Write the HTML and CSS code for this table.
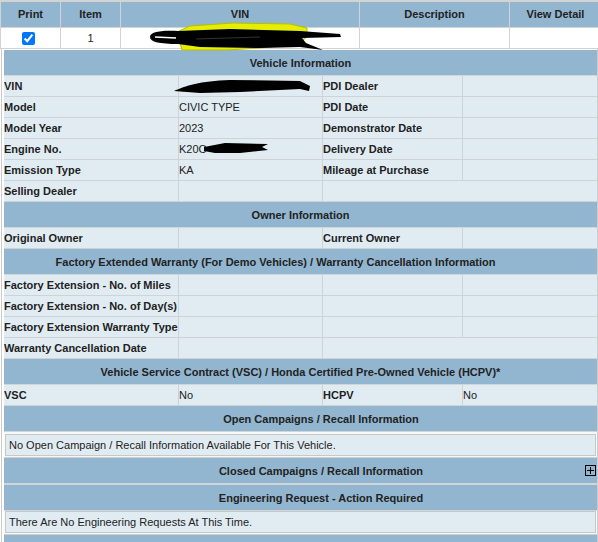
FILE: index.html
```html
<!DOCTYPE html>
<html>
<head>
<meta charset="utf-8">
<title>Vehicle Detail</title>
<link rel="stylesheet" href="styles.css">
</head>
<body>
<div class="list">
  <div class="lh first">Print</div>
  <div class="lh">Item</div>
  <div class="lh">VIN</div>
  <div class="lh">Description</div>
  <div class="lh">View Detail</div>
  <div class="lc first"><input type="checkbox" class="chk" checked></div>
  <div class="lc">1</div>
  <div class="lc"></div>
  <div class="lc"></div>
  <div class="lc"></div>
</div>

<div class="detail">
  <div class="info">
    <div class="hdr"><span>Vehicle Information</span></div>
    <div class="lbl">VIN</div><div class="val"></div><div class="lbl">PDI Dealer</div><div class="val last"></div>
    <div class="lbl">Model</div><div class="val">CIVIC TYPE</div><div class="lbl">PDI Date</div><div class="val last"></div>
    <div class="lbl">Model Year</div><div class="val">2023</div><div class="lbl">Demonstrator Date</div><div class="val last"></div>
    <div class="lbl">Engine No.</div><div class="val">K20C</div><div class="lbl">Delivery Date</div><div class="val last"></div>
    <div class="lbl">Emission Type</div><div class="val">KA</div><div class="lbl">Mileage at Purchase</div><div class="val last"></div>
    <div class="lbl">Selling Dealer</div><div class="val"></div><div class="val span2 last"></div>

    <div class="hdr"><span>Owner Information</span></div>
    <div class="lbl">Original Owner</div><div class="val"></div><div class="lbl">Current Owner</div><div class="val last"></div>

    <div class="hdr"><span class="shift-left">Factory Extended Warranty (For Demo Vehicles) / Warranty Cancellation Information</span></div>
    <div class="lbl">Factory Extension - No. of Miles</div><div class="val"></div><div class="val"></div><div class="val last"></div>
    <div class="lbl">Factory Extension - No. of Day(s)</div><div class="val"></div><div class="val"></div><div class="val last"></div>
    <div class="lbl">Factory Extension Warranty Type</div><div class="val"></div><div class="val"></div><div class="val last"></div>
    <div class="lbl">Warranty Cancellation Date</div><div class="val"></div><div class="val span2 last"></div>

    <div class="hdr"><span>Vehicle Service Contract (VSC) / Honda Certified Pre-Owned Vehicle (HCPV)*</span></div>
    <div class="lbl">VSC</div><div class="val">No</div><div class="lbl">HCPV</div><div class="val last">No</div>

    <div class="hdr"><span class="shift-right">Open Campaigns / Recall Information</span></div>
    <div class="boxrow"><div class="box">No Open Campaign / Recall Information Available For This Vehicle.</div></div>

    <div class="hdr hdr-gap"><span class="shift-right">Closed Campaigns / Recall Information</span>
      <svg class="toggle" width="11" height="11" viewBox="0 0 11 11"><rect x="0.5" y="0.5" width="10" height="10" fill="none" stroke="#000"/><path d="M2 5.5H9M5.5 2V9" stroke="#000" fill="none"/></svg>
    </div>

    <div class="hdr"><span class="shift-right">Engineering Request - Action Required</span></div>
    <div class="boxrow tight"><div class="box">There Are No Engineering Requests At This Time.</div></div>

    <div class="hdr">
      <svg class="toggle" width="11" height="11" viewBox="0 0 11 11"><rect x="0.5" y="0.5" width="10" height="10" fill="none" stroke="#000"/><path d="M2 5.5H9M5.5 2V9" stroke="#000" fill="none"/></svg>
    </div>
  </div>
</div>

<svg class="redactions" width="598" height="542" viewBox="0 0 598 542">
  <path d="M177,32 L190,26 L233,23 L290,24 L307,28 L307,37 L298,44 L260,48 L227,50 L182,50 Z" fill="#e6ee00" stroke="#b9bd00" stroke-width="1"/>
  <path d="M150,37 C150,32 160,30 178,31 L230,29 L300,31 L340,34 L341,37 L302,38 L306,43 L323,50 L300,47 L260,48 L200,47 L178,44 C160,44 150,42 150,37 Z" fill="#000"/>
  <path d="M155,37 L176,38" stroke="#fff" stroke-width="1.5" fill="none"/>
  <path d="M196,39 L260,37" stroke="#333" stroke-width="1" fill="none"/>
  <path d="M174,91 C185,86 200,81 230,80 L300,81 L310,86 L309,91 L300,89 L240,92 L200,93 Z" fill="#000"/>
  <path d="M204,147 L225,143 L268,144 L262,147 L268,150 L240,153 L215,153 L204,151 Z" fill="#000"/>
</svg>
</body>
</html>
```

FILE: styles.css
```css
html, body {
  margin: 0;
  padding: 0;
  overflow: hidden;
  background: #ffffff;
}

body {
  position: relative;
  width: 598px;
  height: 542px;
  font-family: "Liberation Sans", Arial, sans-serif;
  font-size: 11px;
  color: #222222;
}

/* top list */
.list {
  display: grid;
  grid-template-columns: 61px 60px 239px 150px 92px;
  width: 602px;
}

.lh, .lc {
  box-sizing: border-box;
  border-right: 1px solid #d3d3d3;
  border-bottom: 1px solid #d3d3d3;
  text-align: center;
}

.lh {
  height: 28px;
  line-height: 25px;
  border-top: 2px solid #d3d3d3;
  background: #92b6d0;
  font-weight: bold;
}

.lc {
  height: 21px;
  line-height: 20px;
  background: #ffffff;
}

.first {
  border-left: 1px solid #d3d3d3;
}

.chk {
  width: 13px;
  height: 13px;
  margin: 3px 7px 3px 3px;
  vertical-align: -3px;
}

/* detail */
.detail {
  margin-left: 1px;
  padding-top: 1px;
  padding-left: 2px;
  border-left: 1px solid #cccccc;
  border-right: 1px solid #cccccc;
}

.info {
  display: grid;
  grid-template-columns: 175px 144px 140px 134px;
  width: 593px;
}

.hdr {
  grid-column: 1 / -1;
  box-sizing: border-box;
  height: 26px;
  border-bottom: 1px solid #d0d6da;
  background: #92b6d0;
  font-weight: bold;
  display: grid;
  align-items: center;
  justify-items: center;
}

.hdr > * {
  grid-area: 1 / 1;
}

.hdr-gap {
  height: 27px;
  border-bottom-width: 2px;
}

.shift-left {
  padding-right: 50px;
}

.shift-right {
  padding-left: 41px;
}

.toggle {
  justify-self: end;
  margin-right: 1px;
  display: block;
}

.lbl, .val {
  box-sizing: border-box;
  height: 21px;
  line-height: 20px;
  border-bottom: 1px solid #cfd3d6;
  border-right: 1px solid #cfd3d6;
  background: #e1ecf2;
  white-space: nowrap;
  overflow: hidden;
}

.lbl {
  font-weight: bold;
}

.last {
  border-right: none;
}

.span2 {
  grid-column: span 2;
}

.boxrow {
  grid-column: 1 / -1;
  box-sizing: border-box;
  padding: 2px 1px 1px 1px;
  border-bottom: 1px solid #d0d0d0;
  background: #f7f7f7;
}

.boxrow.tight {
  padding-top: 0;
}

.box {
  box-sizing: border-box;
  height: 22px;
  line-height: 20px;
  padding-left: 3px;
  border: 1px solid #c8c8c8;
  background: #e1ecf2;
}

.redactions {
  position: absolute;
  left: 0;
  top: 0;
  pointer-events: none;
}
```
